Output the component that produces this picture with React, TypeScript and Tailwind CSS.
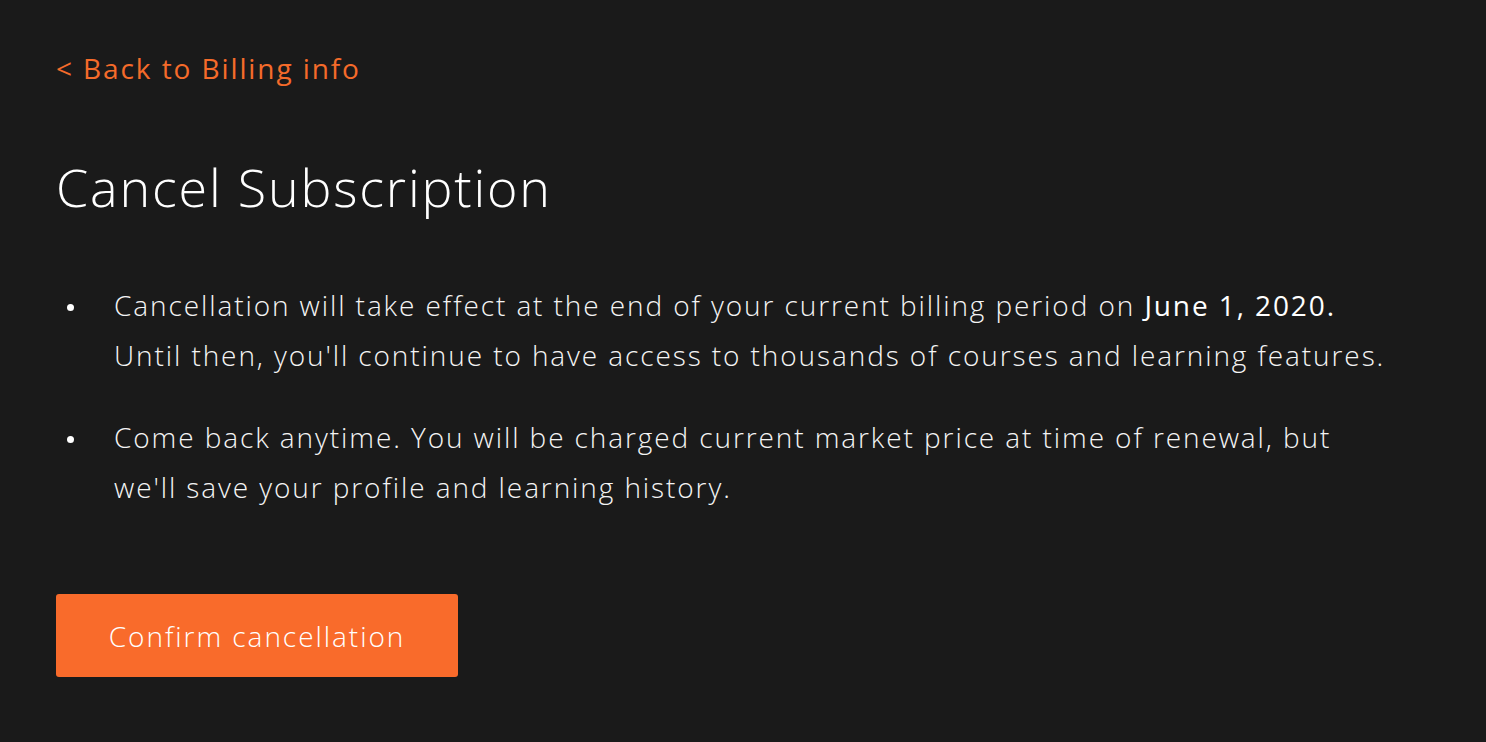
const bullets = [
  {
    id: 'effect',
    content: (
      <>
        Cancellation will take effect at the end of your current billing period on{' '}
        <span className="font-medium text-white">June 1, 2020.</span> Until then, you'll continue
        to have access to thousands of courses and learning features.
      </>
    ),
  },
  {
    id: 'comeback',
    content: (
      <>
        Come back anytime. You will be charged current market price at time of renewal, but
        we'll save your profile and learning history.
      </>
    ),
  },
];

const App = () => {
  return (
    <div className="min-h-screen bg-[#1a1a1a] px-14 pt-[48px] pb-16 font-['Open_Sans',sans-serif] text-white">
      <a
        href="#"
        className="block w-fit text-[28px] leading-[40px] font-normal tracking-[0.068em] text-[#f56b2a]"
      >
        &lt; Back to Billing info
      </a>

      <h1 className="mt-[67px] text-[52px] leading-[64px] font-light tracking-[0.035em]">
        Cancel Subscription
      </h1>

      <ul className="mt-[61px] space-y-[32px]">
        {bullets.map((b) => (
          <li key={b.id} className="flex">
            <span className="w-[58px] shrink-0 pt-[24px] pl-[11px]">
              <span className="block h-[7px] w-[7px] rounded-full bg-white" />
            </span>
            <p className="max-w-[1278px] text-[28px] leading-[50px] font-light tracking-[0.068em] text-[#f4f4f4]">
              {b.content}
            </p>
          </li>
        ))}
      </ul>

      <button
        type="button"
        className="mt-[82px] h-[83px] w-[402px] rounded-[3px] bg-[#f96b2b] text-[28px] font-light tracking-[0.07em] text-white"
      >
        Confirm cancellation
      </button>
    </div>
  );
};

export default App;
